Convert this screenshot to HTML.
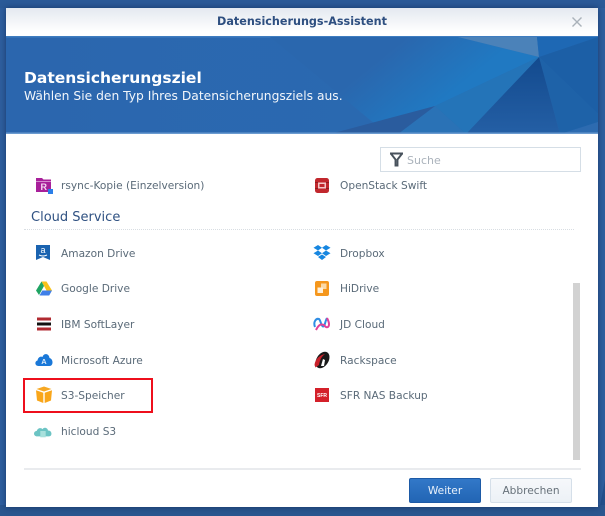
<!DOCTYPE html>
<html><head><meta charset="utf-8">
<style>
html,body{margin:0;padding:0;background:#2f5f9f}
body{width:605px;height:516px;overflow:hidden;position:relative;font-family:"DejaVu Sans","Liberation Sans",sans-serif}
#w{position:absolute;left:0;top:0;width:605px;height:516px;overflow:hidden;background:#2f5d9c;filter:blur(.35px)}
.t{position:absolute;white-space:nowrap;font-size:10.6px;line-height:14px;color:#5a6a78}
.i{position:absolute;width:18px;height:18px;overflow:visible}
.abs{position:absolute}
</style></head>
<body><div id="w">
<svg class="abs" style="left:0;top:0" width="605" height="516">
<rect width="605" height="516" fill="#2f5f9f"/>
<path d="M598 0H605V8Z" fill="#6f8fb8"/>
<path d="M598 516L605 480V516Z" fill="#23508c"/>
<rect x="0" y="505" width="605" height="11" fill="#2a568f"/>
<rect x="0" y="0" width="605" height="8" fill="#2b5a98"/>
</svg>
<div class="abs" style="left:6px;top:8px;width:592px;height:499px;background:#fff;box-shadow:0 0 6px rgba(10,30,70,.6)"></div>
<div class="abs" style="left:6px;top:8px;width:592px;height:28px;background:linear-gradient(#e4e9f0,#fff 85%)"></div>
<div class="t" style="left:6px;top:14px;width:592px;text-align:center;font-size:11.2px;font-weight:bold;color:#2e4f80;line-height:16px">Datensicherungs-Assistent</div>
<svg class="abs" style="left:571px;top:16px" width="12" height="12"><path d="M1.5 1.5L10.5 10.5M10.5 1.5L1.5 10.5" stroke="#aab2ba" stroke-width="1.4"/></svg>
<svg class="abs" style="left:6px;top:36px" width="592" height="98" viewBox="6 36 592 98">
<defs>
<linearGradient id="a" x1="0" y1="0" x2="1" y2="0"><stop offset="0" stop-color="#2b66ae"/><stop offset="1" stop-color="#2a6bb2"/></linearGradient>
<linearGradient id="b" gradientUnits="userSpaceOnUse" x1="390" y1="50" x2="435" y2="106"><stop offset="0" stop-color="#2a67ae"/><stop offset="1" stop-color="#2079c2"/></linearGradient>
<linearGradient id="c" x1="0" y1="0" x2="0" y2="1"><stop offset="0" stop-color="#134a8e"/><stop offset="1" stop-color="#245fa5"/></linearGradient>
</defs>
<rect x="6" y="36" width="592" height="98" fill="url(#a)"/>
<rect x="6" y="36" width="592" height="1.5" fill="#3f7dc0"/>
<path d="M270 37H458L539 57L435 106L375 124Z" fill="url(#b)"/>
<path d="M458 37H537L539 57Z" fill="#4b82b9"/>
<path d="M537 37H598L539 57Z" fill="#1e68b4"/>
<path d="M598 37V114L539 57Z" fill="#1c5fa6"/>
<path d="M539 57L598 114V122L560 134Z" fill="#1e62a8"/>
<path d="M539 57L560 134H466Z" fill="url(#c)"/>
<path d="M539 57L466 134L435 106Z" fill="#2474b8"/>
<path d="M435 106L466 134H398Z" fill="#2a72b6"/>
<path d="M435 106L398 134H330Z" fill="#2a5c9e"/>
<path d="M598 122V134H562Z" fill="#2d6bb0"/>
<rect x="6" y="132.5" width="592" height="1.5" fill="#6b9bd0"/>
</svg>
<div class="t" style="left:24px;top:68px;font-size:15.5px;font-weight:bold;color:#fff;line-height:20px">Datensicherungsziel</div>
<div class="t" style="left:24px;top:89px;font-size:12.3px;color:#f2f6fb;line-height:15px">Wählen Sie den Typ Ihres Datensicherungsziels aus.</div>

<div class="abs" style="left:380px;top:147px;width:199px;height:23px;border:1px solid #d5dee6;background:#fff"></div>
<svg class="abs" style="left:389px;top:152px" width="15" height="15" viewBox="0 0 15 15"><path d="M1 1.500H14M1.800 1.500L6.500 7.500V13.500H8.500V7.500L13.200 1.500" fill="none" stroke="#48525c" stroke-width="1.900"/></svg>
<div class="t" style="left:407px;top:154px;color:#aab2bb;font-size:11px">Suche</div>

<svg class="i" style="left:35px;top:177px" viewBox="0 0 18 18"><path d="M1 1H7L8.500 2.500H16V15H1Z" fill="#a8209a"/><rect x="1" y="4" width="15" height="1" fill="#d58ad0"/><text x="5.500" y="13" font-size="9" font-weight="bold" fill="#f4d8f2" font-family="Liberation Sans">R</text><rect x="13" y="12" width="5" height="5" fill="#2b7fe8"/></svg>
<div class="t" style="left:61px;top:179px">rsync-Kopie (Einzelversion)</div>
<svg class="i" style="left:313px;top:177px" viewBox="0 0 18 18"><rect x="2" y="1" width="14" height="15" rx="2.500" fill="#c1272d"/><rect x="5" y="5.500" width="8" height="6" fill="#f3c7c8"/><rect x="6.500" y="7" width="5" height="3" fill="#c1272d"/><path d="M2 5.500H5M13 5.500H16M2 11.500H5M13 11.500H16" stroke="#8f1c20" stroke-width="1"/></svg>
<div class="t" style="left:340px;top:179px">OpenStack Swift</div>

<div class="t" style="left:31px;top:209px;font-size:13px;line-height:18px;color:#2f5182">Cloud Service</div>
<div class="abs" style="left:24px;top:229px;width:550px;border-top:1px dotted #d8dde2"></div>

<svg class="i" style="left:35px;top:244px" viewBox="0 0 18 18"><path d="M1 1H15V16L8 13L1 16Z" fill="#1a63b0"/><text x="8" y="9" text-anchor="middle" font-size="9" fill="#fff" font-family="Liberation Sans">a</text><path d="M4 11Q8 13 12 11" stroke="#fff" stroke-width="1" fill="none"/></svg>
<div class="t" style="left:61px;top:247px">Amazon Drive</div>
<svg class="i" style="left:313px;top:244px" viewBox="0 0 18 18"><path d="M5 1L9 3.800L5 6.500L0.500 3.800ZM13 1L17.500 3.800L13 6.500L9 3.800ZM5 6.500L9 9.200L5 12L0.500 9.200ZM13 6.500L17.500 9.200L13 12L9 9.200ZM5 13L9 10.500L13 13L9 16Z" fill="#1686e0"/></svg>
<div class="t" style="left:340px;top:247px">Dropbox</div>

<svg class="i" style="left:35px;top:280px" viewBox="0 0 18 18"><path d="M6.500 1.500H11.500L17 10.500H11.500Z" fill="#f7c21b"/><path d="M6.500 1.500L9 6L4 15L1 10.500Z" fill="#1fa463"/><path d="M4.500 15.500L7.300 10.500H17L14.200 15.500Z" fill="#3f7fe8"/></svg>
<div class="t" style="left:61px;top:282px">Google Drive</div>
<svg class="i" style="left:313px;top:280px" viewBox="0 0 18 18"><rect x="2" y="1" width="14" height="15" rx="2" fill="#f5971d"/><rect x="8" y="3.500" width="5.500" height="5.500" fill="#fbd9a6"/><rect x="4.500" y="7.500" width="5.500" height="5.500" fill="#fff0da"/></svg>
<div class="t" style="left:340px;top:282px">HiDrive</div>

<svg class="i" style="left:35px;top:316px" viewBox="0 0 18 18"><rect x="2" y="1.500" width="14" height="3" fill="#b02a30"/><rect x="2" y="6.500" width="14" height="3" fill="#111"/><rect x="2" y="11.500" width="14" height="3" fill="#b02a30"/></svg>
<div class="t" style="left:61px;top:318px">IBM SoftLayer</div>
<svg class="i" style="left:313px;top:316px" viewBox="0 0 18 18"><path d="M2 11C0 6 3 2 6 3C8 5 8 10 10 10.500C12 11 12 5 14 2" fill="none" stroke="#2f8de4" stroke-width="2"/><path d="M3 14C6 8 8 8 11 9C14 13 16 11 16 8C16 6 15 4 14 2" fill="none" stroke="#e0409a" stroke-width="2"/></svg>
<div class="t" style="left:340px;top:318px">JD Cloud</div>

<svg class="i" style="left:35px;top:351px" viewBox="0 0 18 18"><path d="M3.500 15C-.5 15-.5 10 2.500 9.500C3 6 6 5 7.500 6C8.500 2 14 2 14.500 7C18.500 8 18.500 15 14.500 15Z" fill="#1a78d8"/><text x="9" y="13" text-anchor="middle" font-size="7.500" font-weight="bold" fill="#dcebfa" font-family="Liberation Sans">A</text></svg>
<div class="t" style="left:61px;top:354px">Microsoft Azure</div>
<svg class="i" style="left:313px;top:351px" viewBox="0 0 18 18"><ellipse cx="9.500" cy="9" rx="6" ry="9" transform="rotate(32 9.500 9)" fill="#1a1a1a"/><path d="M1.500 14C2 8 7 4 12 3C8 6 7 9 6 14L2.500 16.500Z" fill="#c8202a"/><path d="M8 15L10 8L12 9L11 15Z" fill="#fff"/></svg>
<div class="t" style="left:340px;top:354px">Rackspace</div>

<svg class="i" style="left:35px;top:386px" viewBox="0 0 18 18"><path d="M9 .5L16.500 3L9 5.500L1.500 3Z" fill="#f7a823"/><path d="M1 4.300L8.300 6.700V17L2 14.500Z" fill="#f9a61a"/><path d="M17 4.300L9.700 6.700V17L16 14.500Z" fill="#f9a61a"/></svg>
<div class="t" style="left:61px;top:389px">S3-Speicher</div>
<svg class="i" style="left:313px;top:387px" viewBox="0 0 18 18"><rect x="2" y="1" width="14" height="14" fill="#d4202a"/><text x="9" y="10" text-anchor="middle" font-size="5" font-weight="bold" fill="#fff" font-family="Liberation Sans">SFR</text></svg>
<div class="t" style="left:340px;top:389px">SFR NAS Backup</div>

<div class="abs" style="left:23px;top:378px;width:126px;height:31px;border:2px solid #ee0f1c"></div>

<svg class="i" style="left:34px;top:422px" width="20" height="18" viewBox="0 0 20 18"><path d="M3.500 15C-1 15-1 9 3 9C4 5.500 8 5 9.500 7C11 4 15.500 5.500 15.500 8.500C20 8 21 15 16.500 15Z" fill="#6cc4c4"/><path d="M7 9H13V16H7Z" fill="#a8e0dc"/></svg>
<div class="t" style="left:61px;top:425px">hicloud S3</div>

<div class="abs" style="left:573px;top:283px;width:7px;height:177px;background:#d2d2d2"></div>
<div class="abs" style="left:24px;top:468px;width:557px;height:2px;background:#e9ebee"></div>

<div class="abs" style="left:409px;top:478px;width:70px;height:23px;border:1px solid #1d5aa6;border-radius:2px;background:linear-gradient(#3278c8,#2265b4);color:#eaf2fb;font-size:10.6px;line-height:25px;text-align:center">Weiter</div>
<div class="abs" style="left:490px;top:478px;width:80px;height:23px;border:1px solid #d5dfe9;border-radius:2px;background:linear-gradient(#f6f8fb,#ecf1f6);color:#67717a;font-size:10.6px;line-height:25px;text-align:center">Abbrechen</div>
</div></body></html>
